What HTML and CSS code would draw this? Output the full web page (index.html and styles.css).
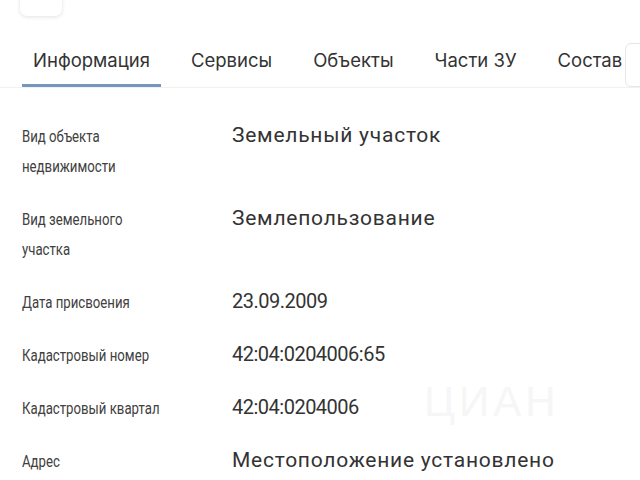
FILE: index.html
```html
<!DOCTYPE html>
<html lang="ru">
<head>
<meta charset="utf-8">
<link rel="stylesheet" href="styles.css">
</head>
<body>
<div class="page">
  <div class="topbar">
    <div class="back-card"></div>
  </div>
  <nav class="tabs">
    <div class="tab active">Информация</div>
    <div class="tab">Сервисы</div>
    <div class="tab">Объекты</div>
    <div class="tab">Части ЗУ</div>
    <div class="tab">Состав</div>
    <div class="scroll-btn"></div>
  </nav>
  <div class="info">
    <div class="label">Вид объекта<br>недвижимости</div>
    <div class="value">Земельный участок</div>
    <div class="label">Вид земельного<br>участка</div>
    <div class="value">Землепользование</div>
    <div class="label">Дата присвоения</div>
    <div class="value num">23.09.2009</div>
    <div class="label">Кадастровый номер</div>
    <div class="value num">42:04:0204006:65</div>
    <div class="label">Кадастровый квартал</div>
    <div class="value num">42:04:0204006</div>
    <div class="label">Адрес</div>
    <div class="value">Местоположение установлено</div>
  </div>
  <div class="watermark">ЦИАН</div>
</div>
</body>
</html>
```

FILE: styles.css
```css
html, body {
  margin: 0;
  padding: 0;
  background: #ffffff;
}
.page {
  position: relative;
  width: 640px;
  height: 480px;
  overflow: hidden;
  font-family: Roboto, "Liberation Sans", sans-serif;
  color: #2b2b2b;
}
.topbar {
  display: flex;
  height: 16px;
  padding-left: 20px;
}
.back-card {
  width: 42px;
  height: 40px;
  margin-top: -24px;
  border-radius: 7px;
  background: #fff;
  box-shadow: 0 1px 4px rgba(0, 0, 0, 0.12);
}
.tabs {
  position: relative;
  display: flex;
  gap: 19px;
  padding-left: 22px;
  margin-top: 24px;
  border-bottom: 1px solid #f1f1f1;
  font-family: Inter, "Noto Sans", sans-serif;
  font-size: 18.5px;
  color: #333;
}
.tab {
  padding: 9px 11px 0;
  height: 47px;
  box-sizing: border-box;
  line-height: 22px;
  white-space: nowrap;
  border-bottom: 3px solid transparent;
}
.tab.active {
  border-bottom-color: #7896bd;
}
.scroll-btn {
  position: absolute;
  left: 625px;
  top: 3px;
  width: 30px;
  height: 42px;
  border: 1px solid #e6e6e6;
  border-radius: 6px;
  background: #fff;
}
.info {
  display: grid;
  grid-template-columns: 210px 1fr;
  row-gap: 23px;
  padding: 34px 0 0 22px;
}
.label {
  font-family: Roboto, sans-serif;
  font-size: 16.5px;
  line-height: 30px;
  color: #404040;
  white-space: nowrap;
  transform: scaleX(0.8);
  transform-origin: left center;
}
.value {
  font-family: Roboto, sans-serif;
  font-size: 21px;
  line-height: 26px;
  letter-spacing: 0.75px;
  color: #333333;
}
.value.num {
  font-size: 20px;
  letter-spacing: -0.5px;
}
.watermark {
  position: absolute;
  left: 424px;
  top: 378px;
  font-size: 42px;
  letter-spacing: 4px;
  color: #f6f6f6;
  font-family: "Liberation Sans", sans-serif;
}
```
